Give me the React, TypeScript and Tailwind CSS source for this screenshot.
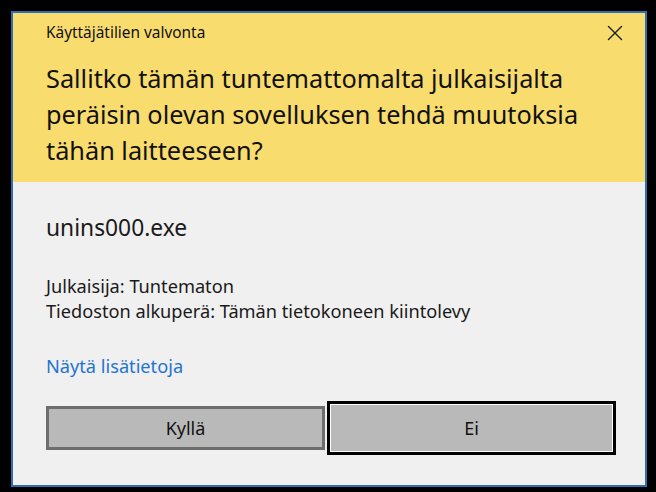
import { X } from 'lucide-react'

const details = [
	'Julkaisija: Tuntematon',
	'Tiedoston alkuperä: Tämän tietokoneen kiintolevy',
]

export default function App() {
	return (
		<div
			className="w-[656px] h-[492px] bg-black pt-[11px] pl-[11px]"
			style={{ fontFamily: '"Noto Sans", "Open Sans", sans-serif' }}
		>
			<div className="w-[636px] h-[476px] border-2 border-[#2f6db5] bg-[#f0f0f0] flex flex-col">
				<div className="h-[169px] bg-[#f9dc6e] pl-[33px] pr-[17px] pt-[11px] text-[#111]">
					<div className="flex items-center justify-between h-[18px]">
						<span className="text-[15.4px] leading-[18px]">Käyttäjätilien valvonta</span>
						<X className="w-[26px] h-[26px] text-[#222]" strokeWidth={1.3} />
					</div>
					<h1 className="mt-[18px] text-[25.3px] leading-[36px]">
						Sallitko tämän tuntemattomalta julkaisijalta
						<br />
						peräisin olevan sovelluksen tehdä muutoksia
						<br />
						tähän laitteeseen?
					</h1>
				</div>

				<div className="flex-1 pl-[33px] pt-[32px] text-[#1a1a1a]">
					<div className="text-[22.8px] leading-[28px]">unins000.exe</div>
					<div className="mt-[32px] flex flex-col text-[18.2px] leading-[25px]">
						{details.map((line) => (
							<span key={line}>{line}</span>
						))}
					</div>
					<div className="mt-[30px] text-[18.2px] leading-[25px] text-[#1f74d0]">
						Näytä lisätietoja
					</div>

					<div className="mt-[22px] flex items-center gap-[2px] text-[18px]">
						<button className="w-[279px] h-[44px] border-[3px] border-[#6d6d6d] bg-[#b9b9b9] text-[#111]">
							Kyllä
						</button>
						<button className="w-[289px] h-[54px] border-[3px] border-black bg-[#b9b9b9] p-0 text-[#111]">
							<div className="w-full h-full border border-white flex items-center justify-center">
								Ei
							</div>
						</button>
					</div>
				</div>
			</div>
		</div>
	)
}
